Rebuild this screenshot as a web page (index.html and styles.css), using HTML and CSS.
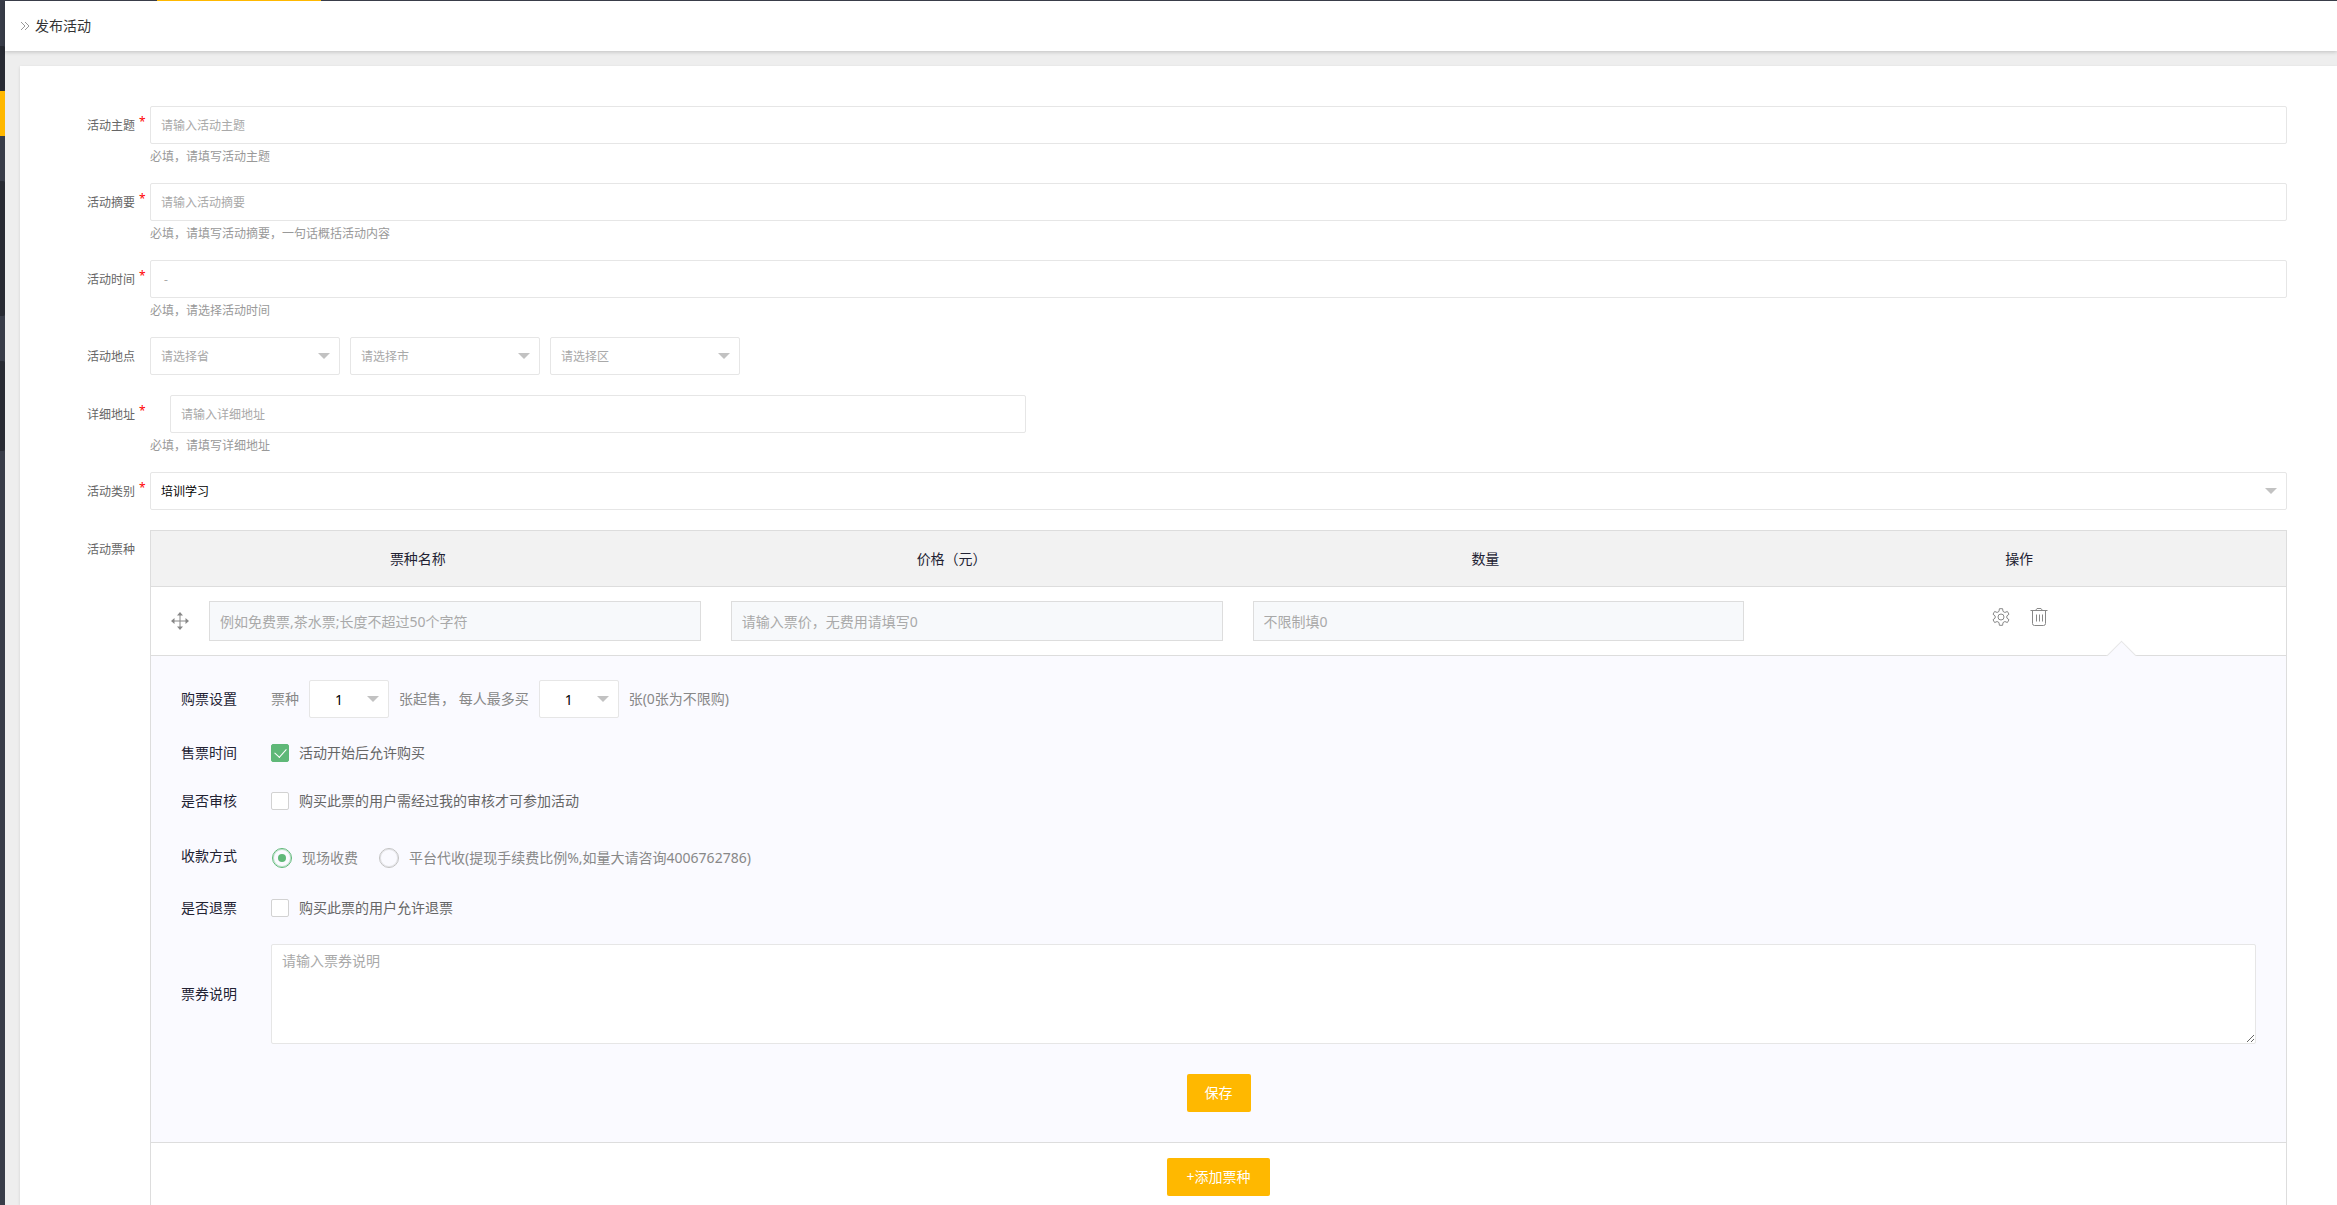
FILE: index.html
```html
<!DOCTYPE html>
<html lang="zh-CN">
<head>
<meta charset="utf-8">
<title>发布活动</title>
<link rel="stylesheet" href="styles.css">
</head>
<body>
<div class="topbar"><span class="topbar-active"></span></div>
<div class="app">
  <nav class="rail" aria-label="主导航">
    <span class="rail-item"></span>
    <span class="rail-item dark"></span>
    <span class="rail-item active"></span>
    <span class="rail-item"></span>
    <span class="rail-item dark tall-3"></span>
    <span class="rail-item"></span>
    <span class="rail-item dark tall-2"></span>
  </nav>
  <div class="page">
    <header class="page-head">
      <svg class="crumb-icon" width="10" height="10" viewBox="0 0 10 10" aria-hidden="true"><path d="M1 1l4 4-4 4M5 1l4 4-4 4"/></svg>
      <h1>发布活动</h1>
    </header>
    <main>
      <form class="card">
        <div class="item">
          <label class="label" for="title">活动主题<i class="star">*</i></label>
          <div class="body"><input class="input" id="title" type="text" placeholder="请输入活动主题"><p class="hint">必填，请填写活动主题</p></div>
        </div>
        <div class="item">
          <label class="label" for="summary">活动摘要<i class="star">*</i></label>
          <div class="body"><input class="input" id="summary" type="text" placeholder="请输入活动摘要"><p class="hint">必填，请填写活动摘要，一句话概括活动内容</p></div>
        </div>
        <div class="item">
          <label class="label" for="time">活动时间<i class="star">*</i></label>
          <div class="body"><input class="input" id="time" type="text" placeholder=" - "><p class="hint">必填，请选择活动时间</p></div>
        </div>
        <div class="item no-hint">
          <label class="label" for="province">活动地点<i class="star"></i></label>
          <div class="body region">
            <div class="select"><select class="muted" id="province"><option>请选择省</option></select></div>
            <div class="select"><select class="muted" aria-label="市"><option>请选择市</option></select></div>
            <div class="select"><select class="muted" aria-label="区"><option>请选择区</option></select></div>
          </div>
        </div>
        <div class="item">
          <label class="label" for="address">详细地址<i class="star">*</i></label>
          <div class="body"><div class="address"><input class="input" id="address" type="text" placeholder="请输入详细地址"></div><p class="hint">必填，请填写详细地址</p></div>
        </div>
        <div class="item no-hint">
          <label class="label" for="category">活动类别<i class="star">*</i></label>
          <div class="body"><div class="select"><select id="category"><option>培训学习</option></select></div></div>
        </div>
        <div class="item">
          <span class="label">活动票种<i class="star"></i></span>
          <div class="body tickets">
            <table>
              <thead>
                <tr><th scope="col">票种名称</th><th scope="col">价格（元）</th><th scope="col">数量</th><th scope="col">操作</th></tr>
              </thead>
              <tbody>
                <tr>
                  <td colspan="4">
                    <div class="ticket">
                      <svg class="move" width="18" height="18" viewBox="0 0 18 18" aria-hidden="true"><path class="line" d="M9 2v14M2 9h14"/><path class="tip" d="M9 0l3 3.500H6zM9 18l3-3.500H6zM0 9l3.500-3v6zM18 9l-3.500-3v6z"/></svg>
                      <input type="text" aria-label="票种名称" placeholder="例如免费票,茶水票;长度不超过50个字符">
                      <input type="text" aria-label="价格" placeholder="请输入票价，无费用请填写0">
                      <input type="text" aria-label="数量" placeholder="不限制填0">
                      <div class="ops">
                        <button type="button" class="icon-btn" aria-label="设置"><svg width="18" height="18" viewBox="0 0 18 18"><path d="M7 3.400L7.400.7h3.200L11 3.400l1.850 1.070 2.540-1.010 1.600 2.780-2.140 1.690v2.140l2.140 1.690-1.600 2.780-2.540-1.010L11 14.600l-.4 2.700H7.400L7 14.600l-1.850-1.070-2.540 1.010-1.600-2.780 2.140-1.690V7.930L1.010 6.240l1.600-2.780 2.540 1.010z"/><circle cx="9" cy="9" r="3"/></svg></button>
                        <button type="button" class="icon-btn" aria-label="删除"><svg width="18" height="18" viewBox="0 0 18 18"><path d="M.5 2.500h17M5.500 2.500L7 .5h4l1.500 2M2.500 2.500v13q0 2 2 2h9q2 0 2-2v-13M6.500 6.500v7M9.500 6.500v7M12.500 6.500v7"/></svg></button>
                      </div>
                    </div>
                  </td>
                </tr>
                <tr>
                  <td colspan="4" class="panel-cell">
                    <div class="panel">
                      <div class="row row-buy">
                        <span class="row-label">购票设置</span>
                        <div class="buy">
                          <span>票种</span>
                          <div class="select count"><select aria-label="起售张数"><option>1</option></select></div>
                          <span>张起售， 每人最多买</span>
                          <div class="select count"><select aria-label="最多购买张数"><option>1</option></select></div>
                          <span>张(0张为不限购)</span>
                        </div>
                      </div>
                      <div class="row row-check">
                        <span class="row-label">售票时间</span>
                        <label class="check"><input type="checkbox" checked>活动开始后允许购买</label>
                      </div>
                      <div class="row row-check">
                        <span class="row-label">是否审核</span>
                        <label class="check"><input type="checkbox">购买此票的用户需经过我的审核才可参加活动</label>
                      </div>
                      <div class="row row-pay">
                        <span class="row-label">收款方式</span>
                        <div class="radios">
                          <label class="radio"><input type="radio" name="pay" checked>现场收费</label>
                          <label class="radio"><input type="radio" name="pay">平台代收(提现手续费比例%,如量大请咨询4006762786)</label>
                        </div>
                      </div>
                      <div class="row row-check">
                        <span class="row-label">是否退票</span>
                        <label class="check"><input type="checkbox">购买此票的用户允许退票</label>
                      </div>
                      <div class="row">
                        <label class="row-label" for="note">票券说明</label>
                        <textarea id="note" placeholder="请输入票券说明"></textarea>
                      </div>
                      <div class="actions"><button type="button" class="btn save">保存</button></div>
                    </div>
                  </td>
                </tr>
              </tbody>
            </table>
            <div class="add"><button type="button" class="btn add-btn">+添加票种</button></div>
          </div>
        </div>
      </form>
    </main>
  </div>
</div>
</body>
</html>
```
FILE: styles.css
```css
* { box-sizing: border-box; }

body {
  margin: 0;
  height: 100vh;
  overflow: hidden;
  display: flex;
  flex-direction: column;
  background: #eee;
  color: #666;
  font: 14px/24px "Noto Sans", "Noto Sans CJK SC", sans-serif;
}

input, select, textarea, button { margin: 0; font: inherit; outline: 0; }
::placeholder { color: #a9a9a9; opacity: 1; }

/* Frame */
.topbar { flex: none; height: 1px; background: #393d49; }
.topbar-active { display: block; width: 164px; height: 1px; margin-left: 157px; background: #ffb800; }
.app { flex: 1; min-height: 0; display: flex; overflow: hidden; }
.rail { flex: none; width: 5px; display: flex; flex-direction: column; background: #393d49; }
.rail-item { flex: none; height: 45px; }
.dark { background: #282b33; border-radius: 0 2px 2px 0; }
.active { background: #ffb800; }
.tall-2 { height: 90px; }
.tall-3 { height: 135px; }

.page { flex: 1; min-width: 0; display: flex; flex-direction: column; }
.page-head {
  position: relative;
  flex: none;
  height: 50px;
  padding-left: 15px;
  display: flex;
  align-items: center;
  gap: 5px;
  background: #fff;
  box-shadow: 0 1px 4px rgba(0, 0, 0, .2);
}
.page-head h1 { margin: 0; font-size: 14px; font-weight: 400; color: #333; }
.crumb-icon { fill: none; stroke: #999; }
main { flex: 1; min-height: 0; padding: 15px 0 0 15px; display: flex; overflow: hidden; }
.card {
  flex: 1;
  min-width: 0;
  padding: 40px 50px 0 0;
  background: #fff;
  box-shadow: 0 1px 3px rgba(0, 0, 0, .12);
}

/* Form rows */
.item { display: flex; margin-bottom: 13px; font-size: 12px; }
.item.no-hint { margin-bottom: 20px; }
.label { flex: none; width: 130px; height: 38px; display: flex; justify-content: flex-end; line-height: 40px; }
.star { width: 15px; padding-left: 4px; font-style: normal; line-height: 32px; color: #f00; }
.body { flex: 1; min-width: 0; }
.hint { margin: 0; line-height: 26px; color: #999; }
.input, .select select {
  display: block;
  width: 100%;
  height: 38px;
  padding: 1px 10px 0;
  border: 1px solid #e6e6e6;
  border-radius: 2px;
  background: #fff;
  color: #000;
}
.select { position: relative; }
.select select { appearance: none; }
.select .muted { color: #a9a9a9; }
.select::after {
  content: "";
  position: absolute;
  top: 16px;
  right: 10px;
  border: 6px solid transparent;
  border-top-color: #c2c2c2;
  border-bottom: 0;
  pointer-events: none;
}
.region { display: flex; gap: 10px; }
.region .select { width: 190px; }
.address { width: 41%; padding-left: 20px; }

/* Ticket table */
.tickets { font-size: 14px; border: 1px solid #ddd; }
table { width: 100%; table-layout: fixed; border-collapse: separate; border-spacing: 0; }
th { height: 56px; padding: 0; background: #f2f2f2; border-bottom: 1px solid #ddd; font-weight: 400; color: #223; }
td { padding: 0; }
.ticket {
  display: grid;
  grid-template-columns: 28px repeat(3, minmax(0, 492fr)) minmax(0, 512fr);
  column-gap: 30px;
  align-items: center;
  height: 68px;
}
.ticket input {
  width: 100%;
  height: 40px;
  padding: 0 10px;
  border: 1px solid #ddd;
  background: #f7f9fb;
}
.move { margin-left: 20px; }
.move .line { fill: none; stroke: #888; stroke-width: 1; }
.move .tip { fill: #888; }
.ops { display: flex; justify-content: center; gap: 20px; padding: 0 20px 8px 0; }
.icon-btn { width: 18px; height: 18px; padding: 0; border: 0; background: none; }
.icon-btn svg { display: block; fill: none; stroke: #888; stroke-linejoin: round; }

.panel-cell { border: solid #ddd; border-width: 1px 0; }
.panel { position: relative; padding: 24px 30px 30px; background: #fafaff; }
.panel::before {
  content: "";
  position: absolute;
  top: -11px;
  right: 154px;
  width: 20px;
  height: 20px;
  border: solid #e6e6e6;
  border-width: 1px 0 0 1px;
  background: #fafaff;
  transform: rotate(45deg);
}
.row { display: flex; align-items: center; }
.row-label { flex: none; width: 90px; color: #223; }
.row-buy { height: 38px; margin-bottom: 23px; }
.row-check { height: 24px; margin-bottom: 24px; }
.row-pay { height: 42px; margin-bottom: 17px; }
.row-pay .row-label { padding-bottom: 4px; }
.buy { display: flex; align-items: center; gap: 10px; color: #888; }
.count { width: 80px; }
.count select { padding-left: 25px; }
.check, .radio { display: flex; align-items: center; gap: 10px; }
.check input, .radio input { appearance: none; flex: none; }
.check input {
  width: 18px;
  height: 18px;
  border: 1px solid #d2d2d2;
  border-radius: 2px;
  background: #fff;
  display: grid;
  place-items: center;
}
.check input:checked { border-color: #5fb878; background: #5fb878; }
.check input:checked::before {
  content: "";
  width: 10px;
  height: 6px;
  margin-bottom: 4px;
  border: solid #fff;
  border-width: 0 0 1px 1px;
  transform: rotate(-48deg);
}
.radios { display: flex; gap: 21px; padding-left: 1px; color: #888; }
.radio input {
  width: 20px;
  height: 20px;
  border: 1px solid #c2c2c2;
  border-radius: 50%;
  display: grid;
  place-items: center;
  box-shadow: inset 0 0 0 1px rgba(194, 194, 194, .4);
}
.radio input:checked { border-color: #5fb878; box-shadow: inset 0 0 0 1px rgba(95, 184, 120, .4); }
.radio input:checked::before { content: ""; width: 8px; height: 8px; border-radius: 50%; background: #5fb878; }
textarea {
  flex: 1;
  height: 100px;
  padding: 4px 10px;
  border: 1px solid #e6e6e6;
  border-radius: 2px;
  background: #fff;
  resize: vertical;
}
.actions { display: flex; justify-content: center; padding-top: 30px; }
.btn { height: 38px; padding: 0; border: 0; border-radius: 2px; background: #ffb800; color: #fff; }
.save { width: 64px; }
.add { display: flex; justify-content: center; padding: 15px 0; }
.add-btn { width: 103px; }
```
